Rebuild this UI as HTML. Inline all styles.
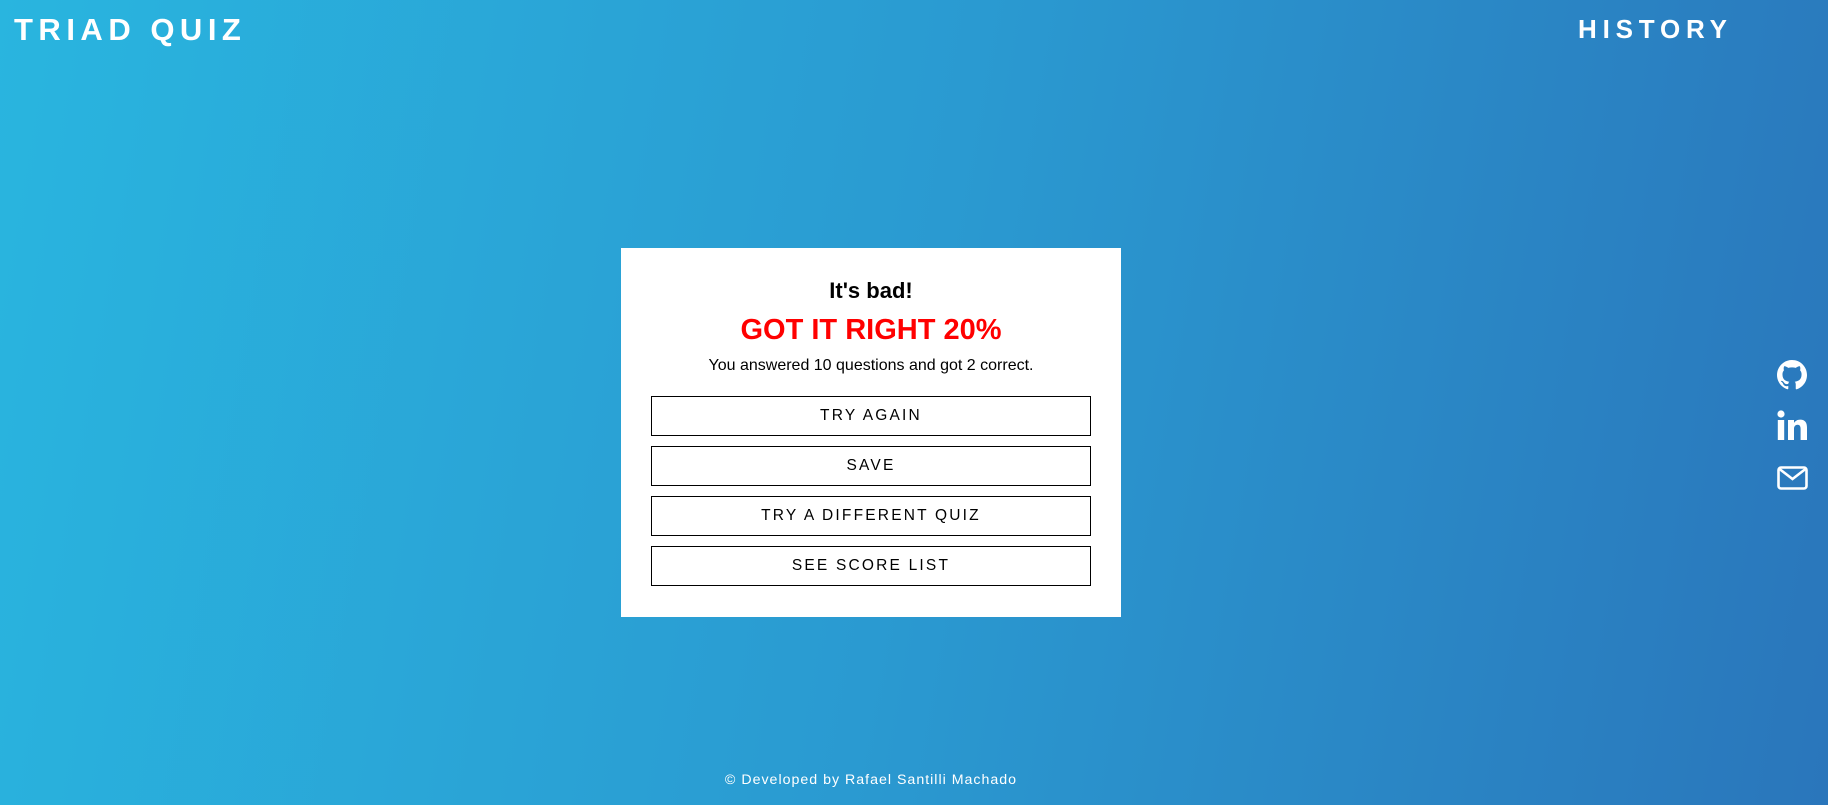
<!DOCTYPE html>
<html><head><meta charset="utf-8"><style>
*{margin:0;padding:0;box-sizing:border-box}
html,body{width:1828px;height:805px;overflow:hidden}
body{background:linear-gradient(100deg,#29b5df 0%,#2a9ad1 50%,#2a76bb 100%);font-family:"Liberation Sans",Arial,sans-serif;position:relative;color:#fff}
.logo{position:absolute;left:14px;top:12px;font-size:31px;font-weight:bold;letter-spacing:5.5px}
.hist{position:absolute;left:1578px;top:14px;font-size:26px;font-weight:bold;letter-spacing:5.8px}
.card{position:absolute;left:621px;top:248px;width:500px;height:369px;background:#fff;color:#000;text-align:center}
.t1{position:absolute;top:30px;width:100%;font-size:22px;font-weight:bold}
.t2{position:absolute;top:66px;width:100%;font-size:29px;font-weight:bold;color:#f00}
.t3{position:absolute;top:109px;width:100%;font-size:16px}
.btn{position:absolute;left:30px;width:440px;height:40px;border:1.5px solid #000;font-size:15.5px;letter-spacing:2.2px;line-height:37px}
.foot{position:absolute;top:772px;left:0;width:1742px;text-align:center;font-size:14.2px;letter-spacing:1px}
svg{position:absolute}
</style></head><body>
<div class="logo">TRIAD QUIZ</div>
<div class="hist">HISTORY</div>
<div class="card">
<div class="t1">It's bad!</div>
<div class="t2">GOT IT RIGHT 20%</div>
<div class="t3">You answered 10 questions and got 2 correct.</div>
<div class="btn" style="top:148px">TRY AGAIN</div>
<div class="btn" style="top:198px">SAVE</div>
<div class="btn" style="top:248px">TRY A DIFFERENT QUIZ</div>
<div class="btn" style="top:298px">SEE SCORE LIST</div>
</div>
<svg style="left:1777px;top:360px" width="30" height="30" viewBox="0 0 16 16"><path fill="#fff" d="M8 0C3.58 0 0 3.580 0 8c0 3.54 2.29 6.53 5.47 7.59.4.07.55-.17.55-.38v-1.330c-2.230.48-2.700-1.070-2.700-1.070-.36-.92-.89-1.170-.89-1.170-.73-.5.05-.49.05-.49.8.06 1.230.83 1.230.83.71 1.220 1.870.87 2.330.66.07-.52.28-.87.51-1.070-1.780-.2-3.640-.89-3.640-3.950 0-.87.31-1.590.82-2.150-.08-.2-.36-1.020.08-2.120 0 0 .67-.21 2.2.82.64-.18 1.320-.27 2-.27.68 0 1.360.09 2 .27 1.530-1.040 2.2-.82 2.2-.82.44 1.1.16 1.920.08 2.120.51.56.82 1.270.82 2.150 0 3.070-1.870 3.750-3.650 3.950.29.25.54.73.54 1.480v2.2c0 .21.15.46.55.38A8.013 8.013 0 0016 8c0-4.420-3.580-8-8-8z"/></svg>
<svg style="left:1777px;top:410px" width="31" height="31" viewBox="0 0 31 31"><circle cx="4" cy="4" r="3.6" fill="#fff"/><rect x="0.8" y="10" width="6.4" height="20" fill="#fff"/><path fill="#fff" d="M11 10h6v3c1.2-2 3.2-3.4 6.2-3.4 4.8 0 6.8 3 6.8 8V30h-6.4V19c0-2.6-.8-4.2-3.1-4.2-2.4 0-3.5 1.8-3.5 4.2V30H11z"/></svg>
<svg style="left:1777px;top:466px" width="31" height="24" viewBox="0 0 31 24"><rect x="1.5" y="1.5" width="28" height="21" rx="2.5" fill="none" stroke="#fff" stroke-width="2.6"/><path d="M2.5 3l13 10 13-10" fill="none" stroke="#fff" stroke-width="2.6"/></svg>
<div class="foot">© Developed by Rafael Santilli Machado</div>
</body></html>
